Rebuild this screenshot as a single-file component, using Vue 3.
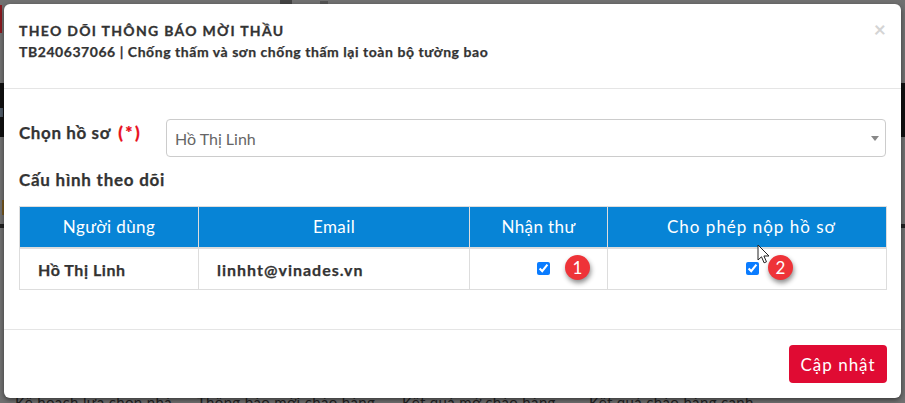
<script setup>
const columns = ['Người dùng', 'Email', 'Nhận thư', 'Cho phép nộp hồ sơ']
const behind = ['Kế hoạch lựa chọn nhà', 'Thông báo mời chào hàng', 'Kết quả mở chào hàng', 'Kết quả chào hàng cạnh']
</script>

<template>
  <div class="page">
    <div class="backdrop">
      <i class="scrap red"></i>
      <i class="scrap top-a"></i>
      <i class="scrap top-b"></i>
      <i class="scrap band-l"></i>
      <i class="scrap band-l-mid"></i>
      <i class="scrap band-r"></i>
      <i class="scrap amber"></i>
      <i class="scrap dark-l"></i>
      <i class="scrap dark-r"></i>
      <span v-for="t in behind" :key="t" class="behind">{{ t }}</span>
    </div>
    <div class="modal">
      <header class="head">
        <h4 class="title">THEO DÕI THÔNG BÁO MỜI THẦU</h4>
        <p class="sub">TB240637066 | Chống thấm và sơn chống thấm lại toàn bộ tường bao</p>
        <span class="close">×</span>
      </header>
      <section class="body">
        <div class="field">
          <label class="lbl">Chọn hồ sơ <b class="req">(*)</b></label>
          <div class="select">Hồ Thị Linh<i class="caret"></i></div>
        </div>
        <div class="cfg">Cấu hình theo dõi</div>
        <table class="tbl">
          <thead>
            <tr><th v-for="c in columns" :key="c">{{ c }}</th></tr>
          </thead>
          <tbody>
            <tr>
              <td class="strong">Hồ Thị Linh</td>
              <td class="strong mail">linhht@vinades.vn</td>
              <td class="chk">
                <input type="checkbox" checked />
                <span class="badge one">1</span>
              </td>
              <td class="chk">
                <input type="checkbox" checked />
                <span class="badge two">2</span>
              </td>
            </tr>
          </tbody>
        </table>
      </section>
      <footer class="foot">
        <button class="btn">Cập nhật</button>
      </footer>
    </div>
    <svg class="cursor" width="13" height="20" viewBox="0 0 13 20">
      <path d="M1 1v15l3.5-3.2 2.6 6 2.4-1-2.6-5.8H12z" fill="#fff" stroke="#222" stroke-width="1" />
    </svg>
  </div>
</template>

<style>
html, body { margin: 0; background: #717171; }
</style>

<style scoped>
.page {
  position: relative;
  width: 905px;
  height: 403px;
  overflow: hidden;
  padding: 4px 4px 5px 4px;
  box-sizing: border-box;
  background: #717171;
  font-family: "Lato", "Noto Sans", sans-serif;
  color: #333;
}
.backdrop {
  position: absolute;
  inset: 0;
}
.scrap { position: absolute; display: block; }
.red { left: 0; top: 5px; width: 2px; height: 28px; background: #8a1a20; }
.top-a { left: 280px; top: 0; width: 12px; height: 4px; background: #444; }
.top-b { left: 320px; top: 1px; width: 8px; height: 3px; background: #555; }
.band-l { left: 0; top: 83px; width: 4px; height: 54px; background: #111; }
.band-l-mid { left: 0; top: 108px; width: 3px; height: 9px; background: #4f5a66; }
.band-r { right: 0; top: 83px; width: 4px; height: 54px; background: #111; }
.amber { left: 2px; top: 200px; width: 2px; height: 15px; background: #7a5a20; }
.dark-l { left: 0; top: 224px; width: 4px; height: 4px; background: #222; }
.dark-r { right: 0; top: 224px; width: 4px; height: 4px; background: #222; }
.behind {
  position: absolute;
  top: 393px;
  font-size: 15px;
  line-height: 18px;
  letter-spacing: .35px;
  color: #222;
  white-space: nowrap;
}
.behind:nth-of-type(1) { left: 15px; }
.behind:nth-of-type(2) { left: 197px; }
.behind:nth-of-type(3) { left: 402px; }
.behind:nth-of-type(4) { left: 589px; }
.modal {
  position: relative;
  height: 100%;
  display: flex;
  flex-direction: column;
  background: #fff;
  border-radius: 6px;
  box-shadow: 0 2px 5px rgba(0, 0, 0, .5);
}
.head {
  position: relative;
  height: 85px;
  box-sizing: border-box;
  padding: 18px 15px 0;
  border-bottom: 1px solid #e5e5e5;
  flex: none;
}
.title {
  margin: 0;
  font-size: 14px;
  line-height: 18px;
  font-weight: 700;
  letter-spacing: 1.3px;
  -webkit-text-stroke: .3px #333;
}
.sub {
  margin: 4px 0 0;
  font-size: 14px;
  line-height: 16px;
  font-weight: 700;
  letter-spacing: .55px;
  -webkit-text-stroke: .25px #333;
}
.close {
  position: absolute;
  top: 14px;
  right: 15px;
  font-size: 21px;
  line-height: 21px;
  font-weight: 700;
  color: #d4d4d4;
}
.body {
  flex: 1;
  padding: 30px 15px 0;
}
.field {
  display: flex;
  align-items: flex-start;
}
.lbl {
  width: 147px;
  flex: none;
  padding-top: 3px;
  font-size: 17px;
  line-height: 22px;
  font-weight: 700;
  letter-spacing: .6px;
  -webkit-text-stroke: .25px #333;
}
.req {
  color: #e8101c;
  letter-spacing: 2.5px;
  margin-left: 3px;
  -webkit-text-stroke: .25px #e8101c;
}
.select {
  position: relative;
  flex: none;
  width: 720px;
  height: 38px;
  box-sizing: border-box;
  padding: 0 8px;
  line-height: 37px;
  font-size: 16px;
  color: #666;
  border: 1px solid #ccc;
  border-radius: 4px;
}
.caret {
  position: absolute;
  right: 6px;
  top: 16px;
  border: 4px solid transparent;
  border-top: 5px solid #888;
  border-bottom: 0;
}
.cfg {
  margin-top: 12px;
  font-size: 17px;
  line-height: 22px;
  font-weight: 700;
  letter-spacing: .75px;
  -webkit-text-stroke: .25px #333;
}
.tbl {
  margin-top: 15px;
  width: 868px;
  table-layout: fixed;
  border-collapse: collapse;
  font-size: 16px;
}
.tbl th {
  height: 41px;
  padding: 0;
  box-sizing: border-box;
  background: #0784d6;
  color: #fff;
  font-size: 17px;
  font-weight: 400;
  letter-spacing: .4px;
  border: 1px solid #ddd;
  border-bottom-width: 2px;
}
.tbl th:nth-child(1) { width: 179px; }
.tbl th:nth-child(2) { width: 271px; }
.tbl th:nth-child(3) { width: 138px; }
.tbl th:nth-child(4) { letter-spacing: 1px; padding-left: 9px; }
.tbl td {
  height: 42px;
  padding: 1px 18px 0;
  box-sizing: border-box;
  border: 1px solid #ddd;
}
.strong { font-weight: 700; letter-spacing: .55px; -webkit-text-stroke: .25px #333; }
.mail { letter-spacing: 1px; }
.tbl td.chk {
  position: relative;
  padding: 0 0 0 10px;
}
.chk input {
  display: block;
  width: 13px;
  height: 13px;
  margin: 0 auto;
  accent-color: #0a7cff;
}
.badge {
  position: absolute;
  top: 6px;
  width: 25px;
  height: 25px;
  border-radius: 50%;
  background: #ee3338;
  color: #fff;
  text-align: center;
  font-size: 17px;
  line-height: 25px;
  box-shadow: 1px 3px 5px rgba(0, 0, 0, .45);
}
.one { left: 95px; }
.two { left: 160px; }
.foot {
  flex: none;
  height: 69px;
  box-sizing: border-box;
  border-top: 1px solid #e5e5e5;
  display: flex;
  justify-content: flex-end;
  align-items: flex-start;
  padding: 15px 14px 0 0;
}
.btn {
  width: 98px;
  height: 38px;
  border: 0;
  border-radius: 4px;
  background: #e00b33;
  color: #fff;
  font: 400 17px "Lato", sans-serif;
  letter-spacing: 1px;
}
.cursor {
  position: absolute;
  left: 757px;
  top: 244px;
}
</style>
